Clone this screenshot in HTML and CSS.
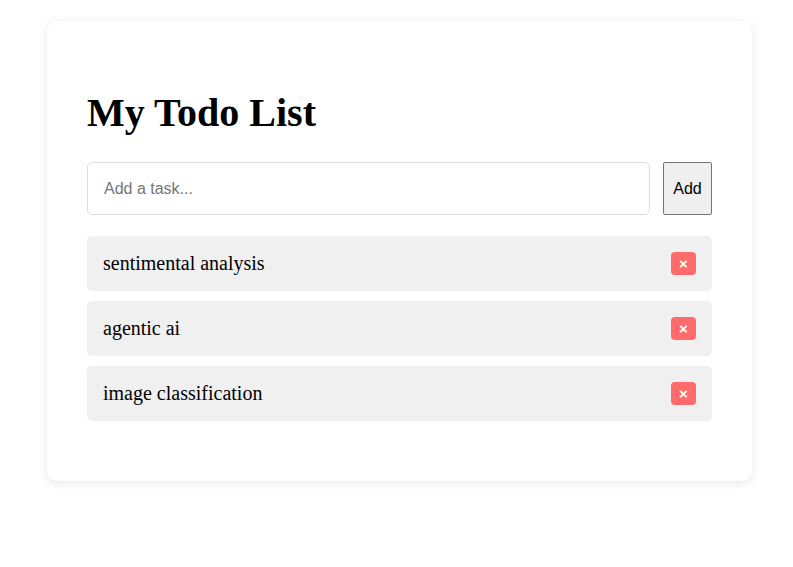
FILE: index.html
```html
<!DOCTYPE html>
<html>
<head>
<meta charset="utf-8">
<link rel="stylesheet" href="styles.css">
</head>
<body>
<div class="card">
  <h1 class="title">My Todo List</h1>
  <div class="add-row">
    <input class="task-input" type="text" placeholder="Add a task...">
    <button class="add-btn">Add</button>
  </div>
  <ul class="list">
    <li class="item"><span class="item-text">sentimental analysis</span><button class="del">×</button></li>
    <li class="item"><span class="item-text">agentic ai</span><button class="del">×</button></li>
    <li class="item"><span class="item-text">image classification</span><button class="del">×</button></li>
  </ul>
</div>
</body>
</html>
```
FILE: styles.css
```css
html, body {
  margin: 0;
  padding: 0;
  background: #ffffff;
}
body {
  min-height: 567px;
  box-sizing: border-box;
  padding: 21px 0 0 47px;
  font-family: "Liberation Serif", "Times New Roman", serif;
}
.card {
  box-sizing: border-box;
  width: 705px;
  padding: 40px;
  background: #fff;
  border-radius: 10px;
  box-shadow: 0 2px 10px rgba(0, 0, 0, 0.1);
}
.title {
  margin: 30px 0 27px;
  font-size: 40px;
  font-weight: bold;
  color: #000;
  line-height: 44px;
}
.add-row {
  display: flex;
  gap: 13px;
}
.task-input {
  flex: 1;
  box-sizing: border-box;
  height: 53px;
  padding: 0 16px;
  border: 1px solid #dddddd;
  border-radius: 5px;
  font-family: "Liberation Sans", Arial, sans-serif;
  font-size: 16px;
  color: #000;
  outline: none;
}
.task-input::placeholder {
  color: #757575;
}
.add-btn {
  box-sizing: border-box;
  width: 49px;
  height: 53px;
  padding: 0;
  background: #efefef;
  border: 1px solid #767676;
  border-radius: 2px;
  font-family: "Liberation Sans", Arial, sans-serif;
  font-size: 16px;
  color: #000;
}
.list {
  list-style: none;
  margin: 21px 0 20px;
  padding: 0;
  display: flex;
  flex-direction: column;
  gap: 10px;
}
.item {
  display: flex;
  align-items: center;
  justify-content: space-between;
  box-sizing: border-box;
  height: 55px;
  padding: 0 16px;
  background: #f0f0f0;
  border-radius: 5px;
}
.item-text {
  font-size: 20px;
  color: #000;
}
.del {
  width: 25px;
  height: 23px;
  padding: 0;
  border: none;
  border-radius: 4px;
  background: #ff6b6b;
  color: #fff;
  font-family: "Liberation Sans", Arial, sans-serif;
  font-size: 15px;
  font-weight: bold;
  line-height: 23px;
}
```
